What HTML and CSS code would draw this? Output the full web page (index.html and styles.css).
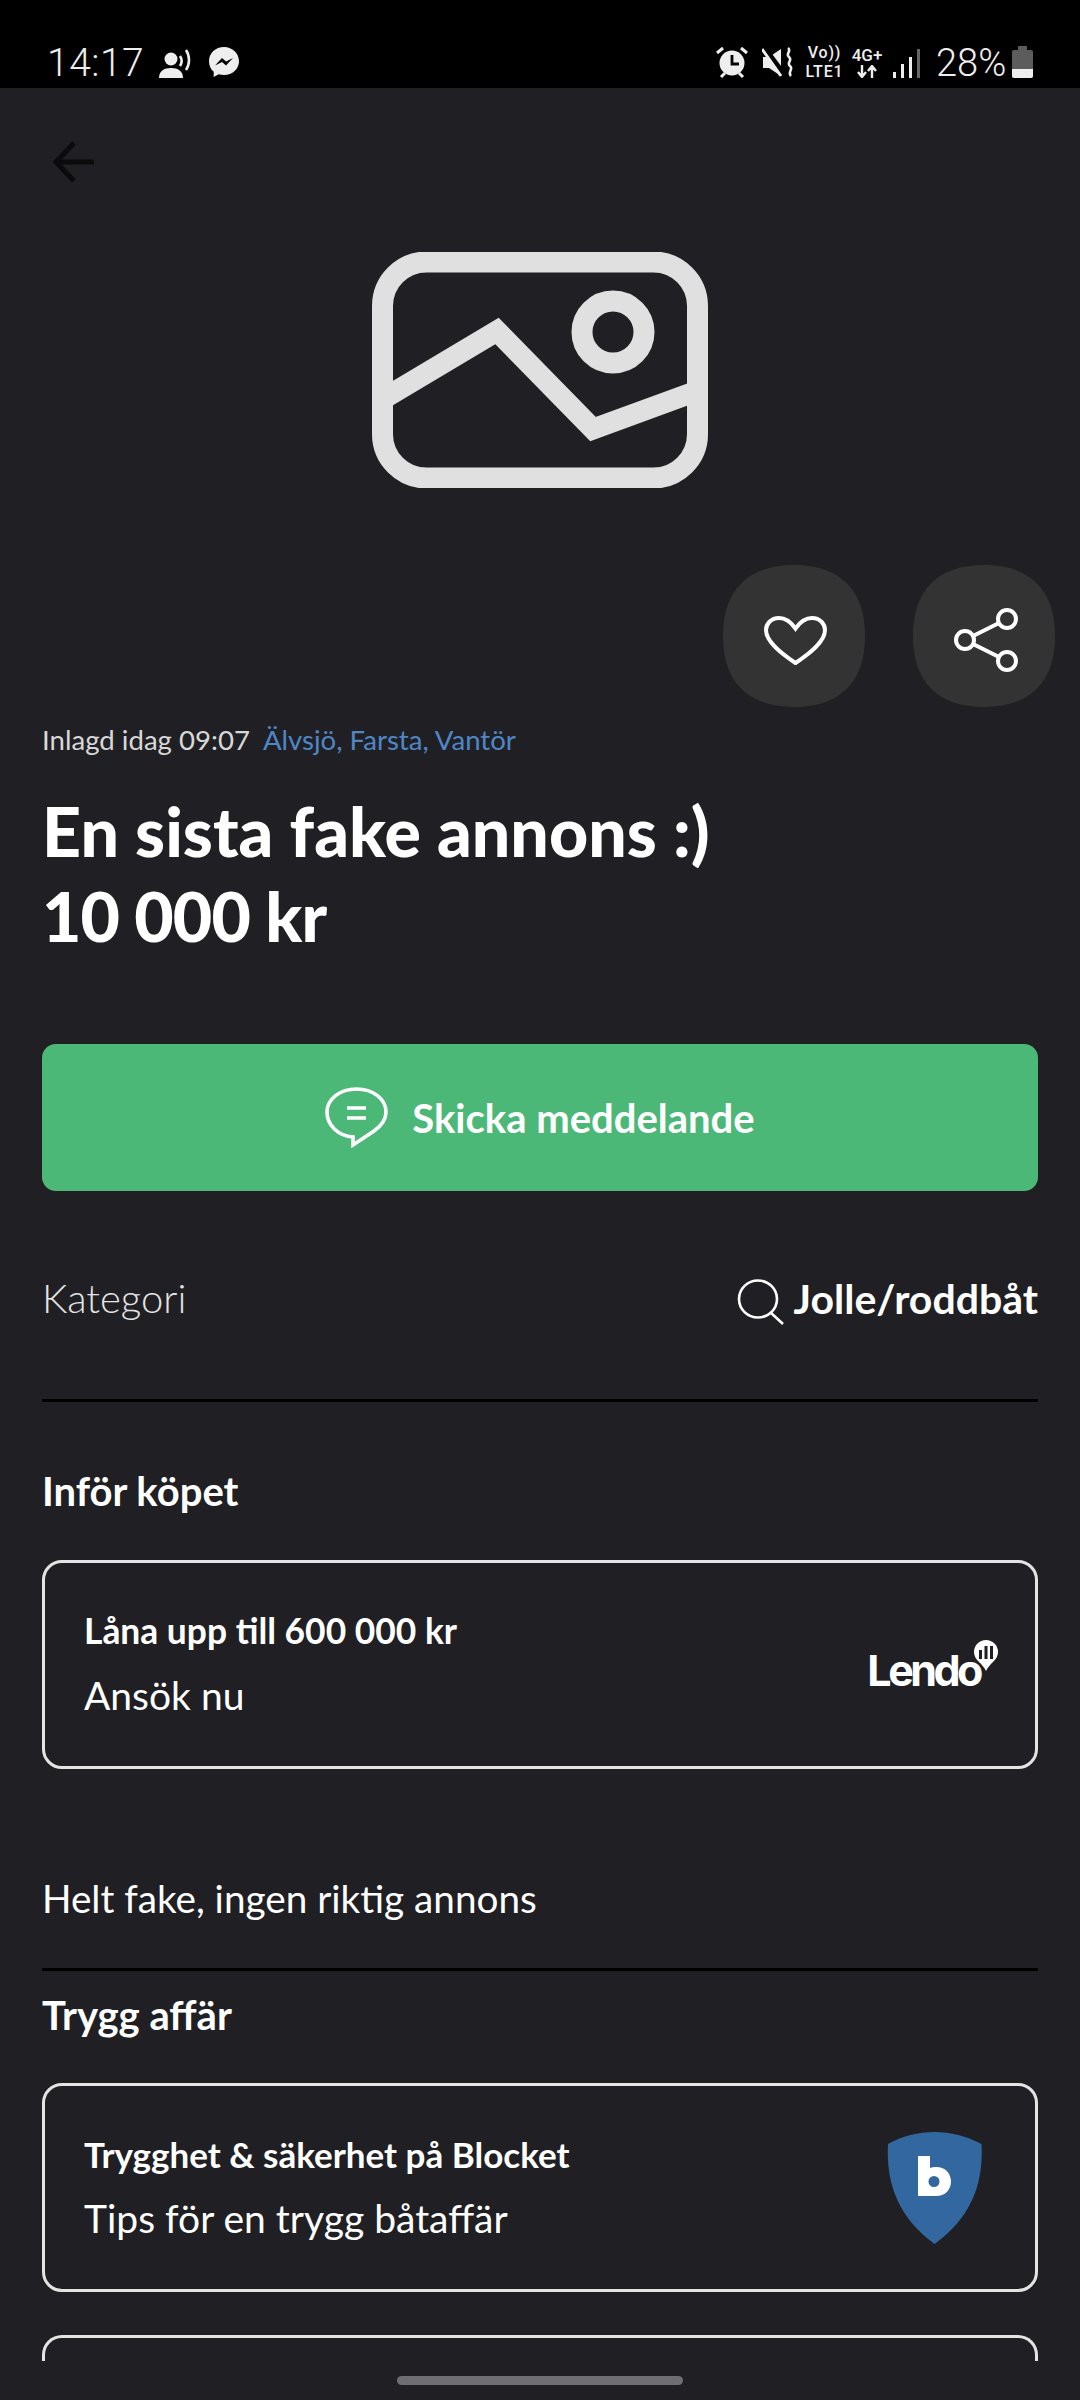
FILE: index.html
```html
<!DOCTYPE html>
<html lang="sv">
<head>
<meta charset="utf-8">
<title>En sista fake annons</title>
<link rel="stylesheet" href="styles.css">
</head>
<body>
<header class="status">
  <div class="status-left">
    <span class="clock">14:17</span>
    <svg class="ic-person" viewBox="0 0 34 29"><circle cx="12" cy="10" r="6.500" fill="#eee"/><path d="M0 29c0-7 5-10 12-10s12 3 12 10z" fill="#eee"/><path d="M21 7c2 3 2 7 0 10M27 1c4 6 4 14 0 20" fill="none" stroke="#eee" stroke-width="2.600"/></svg>
    <svg class="ic-msgr" viewBox="0 0 32 32"><path d="M16 1C7.500 1 1 7.200 1 15.200c0 4.300 1.800 8 4.700 10.500V31l5-2.700c1.600.5 3.400.7 5.300.7 8.500 0 15-6.200 15-13.800S24.500 1 16 1z" fill="#eee"/><path d="M7 19.500l7-7.500 4 3.500 7-3.500-7 7.500-4-3.500z" fill="#000"/></svg>
  </div>
  <div class="status-right">
    <svg class="ic-alarm" viewBox="0 0 32 32"><circle cx="16" cy="17" r="12.500" fill="#eee"/><path d="M16 9v9h7" fill="none" stroke="#000" stroke-width="2.800"/><path d="M1 7l6-5M31 7l-6-5M5 31l4-4M27 31l-4-4" stroke="#eee" stroke-width="3"/></svg>
    <svg class="ic-mute" viewBox="0 0 31 31"><path d="M1 10h6l12-8v27l-12-8H1z" fill="#eee"/><path d="M2 1l20 27" stroke="#000" stroke-width="6"/><path d="M0 2l19 27" stroke="#eee" stroke-width="3"/><path d="M26 1c4 3-3 6 1 9s-3 6 1 9-3 6 1 10" fill="none" stroke="#eee" stroke-width="2.600"/></svg>
    <div class="volte">Vo))<br>LTE1</div>
    <div class="net"><span>4G+</span><svg viewBox="0 0 22 13"><path d="M6 0v11M2 7l4 5 4-5M16 13V2M12 6l4-5 4 5" fill="none" stroke="#eee" stroke-width="2.400"/></svg></div>
    <svg class="ic-signal" viewBox="0 0 27 29"><rect x="0" y="23" width="3" height="6" fill="#eee"/><rect x="8" y="15" width="3" height="14" fill="#eee"/><rect x="16" y="8" width="3" height="21" fill="#eee"/><rect x="24" y="0" width="3" height="29" fill="#666"/></svg>
    <span class="pct">28%</span>
    <svg class="ic-batt" viewBox="0 0 21 32"><rect x="6" y="0" width="9" height="5" fill="#5c5c5c"/><rect x="0" y="4" width="21" height="28" rx="2" fill="#5c5c5c"/><path d="M0 23h21v7a2 2 0 0 1-2 2H2a2 2 0 0 1-2-2z" fill="#eee"/></svg>
  </div>
</header>

<main class="page">
  <div class="nav">
    <svg class="ic-back" viewBox="0 0 42 42"><path d="M41 21H4M21 2L3 21l18 19" fill="none" stroke="#0b0b0d" stroke-width="5"/></svg>
  </div>

  <div class="hero">
    <svg class="ic-image" viewBox="0 0 336 236"><rect x="10.500" y="10" width="315" height="216" rx="44" fill="none" stroke="#e0e0e0" stroke-width="21"/><path d="M11 147L125 79l96 98 104-38" fill="none" stroke="#e0e0e0" stroke-width="21"/><circle cx="241" cy="80" r="31" fill="none" stroke="#e0e0e0" stroke-width="21"/></svg>
  </div>

  <div class="actions">
    <button class="round"><svg class="ic-heart" viewBox="0 0 63 49"><path d="M31.500 12.500C27 6 22 2 15 2 7 2 2 8 2 14c0 12 16 24 29.500 33C45 38 61 26 61 14c0-6-5-12-13-12-7 0-12 4-16.500 10.500z" fill="none" stroke="#fff" stroke-width="4"/></svg></button>
    <button class="round"><svg class="ic-share" viewBox="0 0 64 64"><path d="M11 32l42-21M11 32l42 21" stroke="#fff" stroke-width="4"/><circle cx="11" cy="32" r="9" fill="#333" stroke="#fff" stroke-width="4"/><circle cx="53" cy="11" r="9" fill="#333" stroke="#fff" stroke-width="4"/><circle cx="53" cy="53" r="9" fill="#333" stroke="#fff" stroke-width="4"/></svg></button>
  </div>

  <p class="meta">Inlagd idag 09:07<span class="loc">Älvsjö, Farsta, Vantör</span></p>
  <h1 class="title">En sista fake annons :)<br><span class="price">10 000 kr</span></h1>

  <button class="cta">
    <svg class="ic-chat" viewBox="0 0 63 61"><path d="M31.500 2C15 2 2 12 2 25c0 13 11 24 26 25v8l21-14c7-5 12-11 12-19C61 12 48 2 31.500 2z" fill="none" stroke="#fff" stroke-width="3.600"/><path d="M22 21h19M22 31h19" stroke="#fff" stroke-width="3.600"/></svg>
    <span>Skicka meddelande</span>
  </button>

  <div class="row">
    <span class="row-label">Kategori</span>
    <span class="row-val"><svg class="ic-search" viewBox="0 0 47 46"><ellipse cx="21" cy="20" rx="19" ry="18.500" fill="none" stroke="#fff" stroke-width="2.600"/><path d="M33 33l13 12" stroke="#fff" stroke-width="2.600"/></svg>Jolle/roddbåt</span>
  </div>
  <hr class="rule">

  <h2 class="section sec-kop">Inför köpet</h2>
  <a class="card">
    <div class="card-text"><strong class="t-lana">Låna upp till 600 000 kr</strong><span>Ansök nu</span></div>
    <div class="lendo"><span class="lendo-word">Lendo</span><svg class="lendo-mark" viewBox="0 0 24 32"><path d="M12 31C10 27 8 25 5 22 2 19 0 16 0 12a12 12 0 0 1 24 0c0 4-2 7-5 10-3 3-5 5-7 9z" fill="#fff"/><path d="M6.500 10v9M12 6v13M17.500 6v13" stroke="#202024" stroke-width="3"/></svg></div>
  </a>

  <p class="desc">Helt fake, ingen riktig annons</p>
  <hr class="rule">

  <h2 class="section sec-trygg">Trygg affär</h2>
  <a class="card">
    <div class="card-text"><strong>Trygghet &amp; säkerhet på Blocket</strong><span>Tips för en trygg båtaffär</span></div>
    <svg class="shield" viewBox="0 0 95 112"><path d="M47.500 0c16 0 32 4 47 12 2 36-8 72-47 100C9 84-1 48 1 12 15 4 31 0 47.500 0z" fill="#32689f"/><path d="M31 24h12v12c2-1 4-1 6-1 9 0 15 6 15 14.500S58 64 49 64H31z" fill="#fff"/><circle cx="47" cy="49.500" r="5.500" fill="#32689f"/></svg>
  </a>
  <div class="card-peek"></div>
</main>
<div class="home-bar"></div>
</body>
</html>
```
FILE: styles.css
```css
* { box-sizing: border-box; }
html, body { margin: 0; padding: 0; }
body {
  width: 1080px;
  height: 2400px;
  background: #202024;
  color: #fff;
  font-family: Lato, "Noto Sans", sans-serif;
  overflow: hidden;
  position: relative;
}
.status {
  height: 88px;
  background: #000;
  display: flex;
  justify-content: space-between;
  align-items: flex-end;
  padding: 0 47px 10px 47px;
  color: #eee;
  font-family: Roboto, sans-serif;
}
.status-left, .status-right { display: flex; align-items: flex-end; }
.status svg { display: block; flex: none; }
.clock { font-size: 39px; line-height: 30px; font-weight: 300; letter-spacing: .5px; }
.ic-person { width: 34px; height: 29px; margin-left: 15px; }
.ic-msgr { width: 32px; height: 32px; margin-left: 15px; }
.ic-alarm { width: 32px; height: 32px; }
.ic-mute { width: 31px; height: 31px; margin-left: 14px; }
.volte { margin: 0 0 -3px 12px; font-size: 16px; line-height: 19px; font-weight: 500; letter-spacing: .8px; width: 39px; text-align: center; }
.net { display: flex; flex-direction: column; align-items: center; margin-left: 8px; font-size: 17px; line-height: 16px; font-weight: 500; width: 30px; }
.net svg { width: 22px; height: 13px; margin-top: 2px; }
.ic-signal { width: 27px; height: 29px; margin-left: 11px; }
.pct { font-size: 38px; line-height: 30px; font-weight: 300; margin-left: 16px; width: 69px; white-space: nowrap; }
.ic-batt { width: 21px; height: 32px; margin-left: 7px; }

.page { padding: 0 42px; height: 2273px; overflow: hidden; }
.nav { height: 164px; padding: 53px 0 0 11px; }
.ic-back { width: 42px; height: 42px; display: block; }
.hero { display: flex; justify-content: center; }
.ic-image { width: 336px; height: 236px; display: block; }
.actions { display: flex; justify-content: flex-end; gap: 48px; margin: 77px -17px 0 0; }
.round {
  width: 142px; height: 142px; border: 0; background: #333;
  clip-path: path("M71 0C117 0 142 25 142 71S117 142 71 142 0 117 0 71 25 0 71 0Z");
  display: flex; align-items: center; justify-content: center; padding: 0;
}
.ic-heart { width: 63px; height: 49px; margin: 8px 0 0 2px; }
.ic-share { width: 64px; height: 64px; margin: 8px 0 0 3px; }
.meta { margin: 15px 0 0; font-size: 27.6px; line-height: 36px; color: #d8d8d8; }
.loc { color: #4f86c6; margin-left: 13px; }
.title { margin: 30px 0 0; font-size: 68px; line-height: 85px; font-weight: 900; }
.price { letter-spacing: -.9px; }
.cta {
  width: 100%; height: 147px; margin-top: 86px; background: #4cb877; border: 0; border-radius: 14px;
  display: flex; align-items: center; justify-content: center; gap: 24px; color: #fff;
  font-family: inherit; font-size: 40px; font-weight: 700; padding: 0;
}
.ic-chat { width: 63px; height: 61px; }
.row { display: flex; justify-content: space-between; align-items: center; margin-top: 83px; height: 48px; }
.row-label { font-size: 40px; font-weight: 300; color: #e4e4e4; }
.row-val { display: flex; align-items: center; font-size: 41px; font-weight: 700; }
.ic-search { width: 47px; height: 46px; margin-right: 10px; margin-top: 8px; }
.rule { border: 0; border-top: 3px solid #000; margin: 0; }
.row + .rule { margin-top: 77px; }
.section { margin: 0; font-size: 40px; line-height: 48px; font-weight: 700; }
.sec-kop { margin-top: 65px; }
.sec-trygg { margin-top: 20px; }
.card {
  display: flex; justify-content: space-between; align-items: center;
  height: 209px; margin-top: 45px; padding: 0 39px;
  border: 3px solid #e4e4e4; border-radius: 20px;
}
.card-text { display: flex; flex-direction: column; gap: 19px; }
.card-text strong { font-size: 35px; line-height: 42px; font-weight: 700; }
.card-text .t-lana { font-size: 35.400px; }
.card-text span { font-size: 39px; line-height: 48px; font-weight: 400; }
.lendo { display: flex; align-items: flex-start; margin-right: -2px; }
.lendo-word { font-family: Inter, sans-serif; font-size: 43px; line-height: 44px; font-weight: 700; letter-spacing: -3.500px; margin-top: 11px; }
.lendo-mark { width: 24px; height: 32px; margin: 3px 0 0 -6px; }
.desc { margin: 103px 0 0; font-size: 38.700px; line-height: 52px; font-weight: 400; }
.desc + .rule { margin-top: 44px; }
.shield { width: 95px; height: 112px; margin-right: 14px; }
.card-peek {
  height: 60px; margin-top: 43px; border: 3px solid #e4e4e4; border-bottom: 0; border-radius: 20px 20px 0 0;
}
.sec-trygg + .card { margin-top: 44px; }
.home-bar {
  position: absolute; left: 397px; top: 2376px; width: 286px; height: 9px; border-radius: 5px; background: #6f6f73;
}
```
